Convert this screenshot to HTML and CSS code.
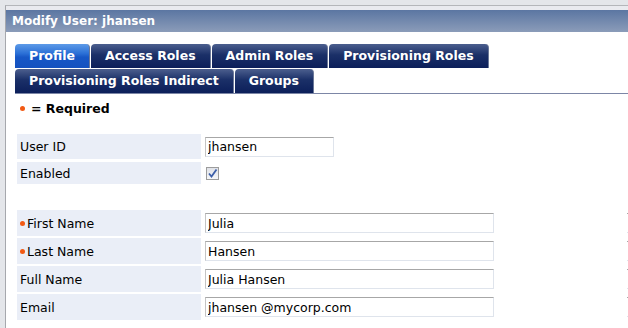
FILE: index.html
```html
<!DOCTYPE html>
<html lang="en">
<head>
    <meta charset="UTF-8">
    <title>Modify User</title>
    <link rel="stylesheet" href="styles.css">
</head>
<body>
    <div class="panel">
        <div class="title-bar">Modify User: jhansen</div>

        <div class="tabs">
            <div class="tab-row">
                <a class="tab active">Profile</a>
                <a class="tab">Access Roles</a>
                <a class="tab">Admin Roles</a>
                <a class="tab">Provisioning Roles</a>
            </div>
            <div class="tab-row">
                <a class="tab">Provisioning Roles Indirect</a>
                <a class="tab">Groups</a>
            </div>
        </div>

        <div class="required-note"><span class="dot"></span>= Required</div>

        <div class="form-block">
            <div class="row tall">
                <div class="label">User ID</div>
                <div class="field"><input class="text short" type="text" value="jhansen"></div>
            </div>
            <div class="row">
                <div class="label">Enabled</div>
                <div class="field">
                    <span class="check">
                        <svg width="11" height="11" viewBox="0 0 11 11"><path d="M2 5.5 L4.5 8.5 L9.5 1.5" fill="none" stroke="#3d5fa8" stroke-width="1.8"/></svg>
                    </span>
                </div>
            </div>
        </div>

        <div class="form-block names">
            <div class="row name">
                <div class="label"><span class="dot small"></span>First Name</div>
                <div class="field"><input class="text long" type="text" value="Julia"></div>
                <div class="field more"><input class="text" type="text"></div>
            </div>
            <div class="row name">
                <div class="label"><span class="dot small"></span>Last Name</div>
                <div class="field"><input class="text long" type="text" value="Hansen"></div>
                <div class="field more"><input class="text" type="text"></div>
            </div>
            <div class="row name">
                <div class="label">Full Name</div>
                <div class="field"><input class="text long" type="text" value="Julia Hansen"></div>
                <div class="field more"><input class="text" type="text"></div>
            </div>
            <div class="row name">
                <div class="label">Email</div>
                <div class="field"><input class="text long" type="text" value="jhansen @mycorp.com"></div>
                <div class="field more"><input class="text" type="text"></div>
            </div>
        </div>
    </div>
</body>
</html>
```

FILE: styles.css
```css
* {
    margin: 0;
    padding: 0;
    box-sizing: border-box;
}

body {
    font-family: "DejaVu Sans", Verdana, sans-serif;
    font-size: 12px;
    background-color: #e4e6ea;
    color: #000;
    overflow: hidden;
}

.panel {
    margin: 5px 0 0 5px;
    height: 330px;
    border-left: 1px solid #a6a8ad;
    border-top: 1px solid #b4b6ba;
    background-color: white;
    overflow: hidden;
}

.title-bar {
    height: 26px;
    border-top: 4px solid #e9eaef;
    padding: 4px 0 0 6px;
    background: linear-gradient(#5b76a2, #8b9cb9);
    color: white;
    font-weight: bold;
    font-size: 12px;
}

.tabs {
    margin: 12px 0 0 9px;
    border-bottom: 1px solid #7c86a6;
}

.tab-row {
    display: flex;
    gap: 1px;
}

.tab-row + .tab-row {
    margin-top: 1px;
}

.tab {
    display: block;
    height: 24px;
    line-height: 24px;
    padding: 0 14px;
    color: white;
    font-weight: bold;
    font-size: 12.5px;
    border-radius: 4px 4px 0 0;
    background: linear-gradient(#4c5f8e, #1b3068 45%, #0c1f5a);
    border-right: 1px solid #6b7898;
}

.tab.active {
    background: linear-gradient(#5d9be8, #2a6fd6 40%, #1757c6 55%, #1552c0);
}

.required-note {
    display: flex;
    align-items: center;
    margin: 7px 0 0 14px;
    font-weight: bold;
    font-size: 12.5px;
    height: 14px;
}

.dot {
    display: inline-block;
    width: 5px;
    height: 5px;
    border-radius: 50%;
    background-color: #f25a14;
    margin-right: 6px;
}

.dot.small {
    margin-right: 2px;
}

.form-block {
    margin: 19px 0 0 11px;
    display: flex;
    flex-direction: column;
    gap: 3px;
}

.form-block.names {
    margin-top: 26px;
    gap: 2px;
}

.row {
    display: flex;
    gap: 4px;
    height: 22px;
}

.row.tall {
    height: 25px;
}

.row.name {
    height: 26px;
}

.label {
    width: 184px;
    flex-shrink: 0;
    background-color: #eaeef7;
    padding-left: 3px;
    display: flex;
    align-items: center;
    font-size: 12.5px;
}

.field {
    display: flex;
    align-items: center;
    flex-shrink: 0;
}

.field.more {
    margin-left: 129px;
}

.field.more .text {
    width: 100px;
    border-left: none;
}

.text {
    height: 20px;
    font-family: "DejaVu Sans", Verdana, sans-serif;
    font-size: 12.5px;
    padding: 0 2px;
    border: 1px solid #dfe4ec;
    border-top-color: #a7a7a7;
    border-left-color: #c4c4c4;
    outline: none;
    color: #000;
}

.text.short {
    width: 129px;
}

.text.long {
    width: 289px;
}

.check {
    display: flex;
    align-items: center;
    justify-content: center;
    width: 13px;
    height: 13px;
    margin-left: 1px;
    border: 1px solid #9c9c9c;
    background: linear-gradient(#e0e2e8, #f6f7f9);
}
```
